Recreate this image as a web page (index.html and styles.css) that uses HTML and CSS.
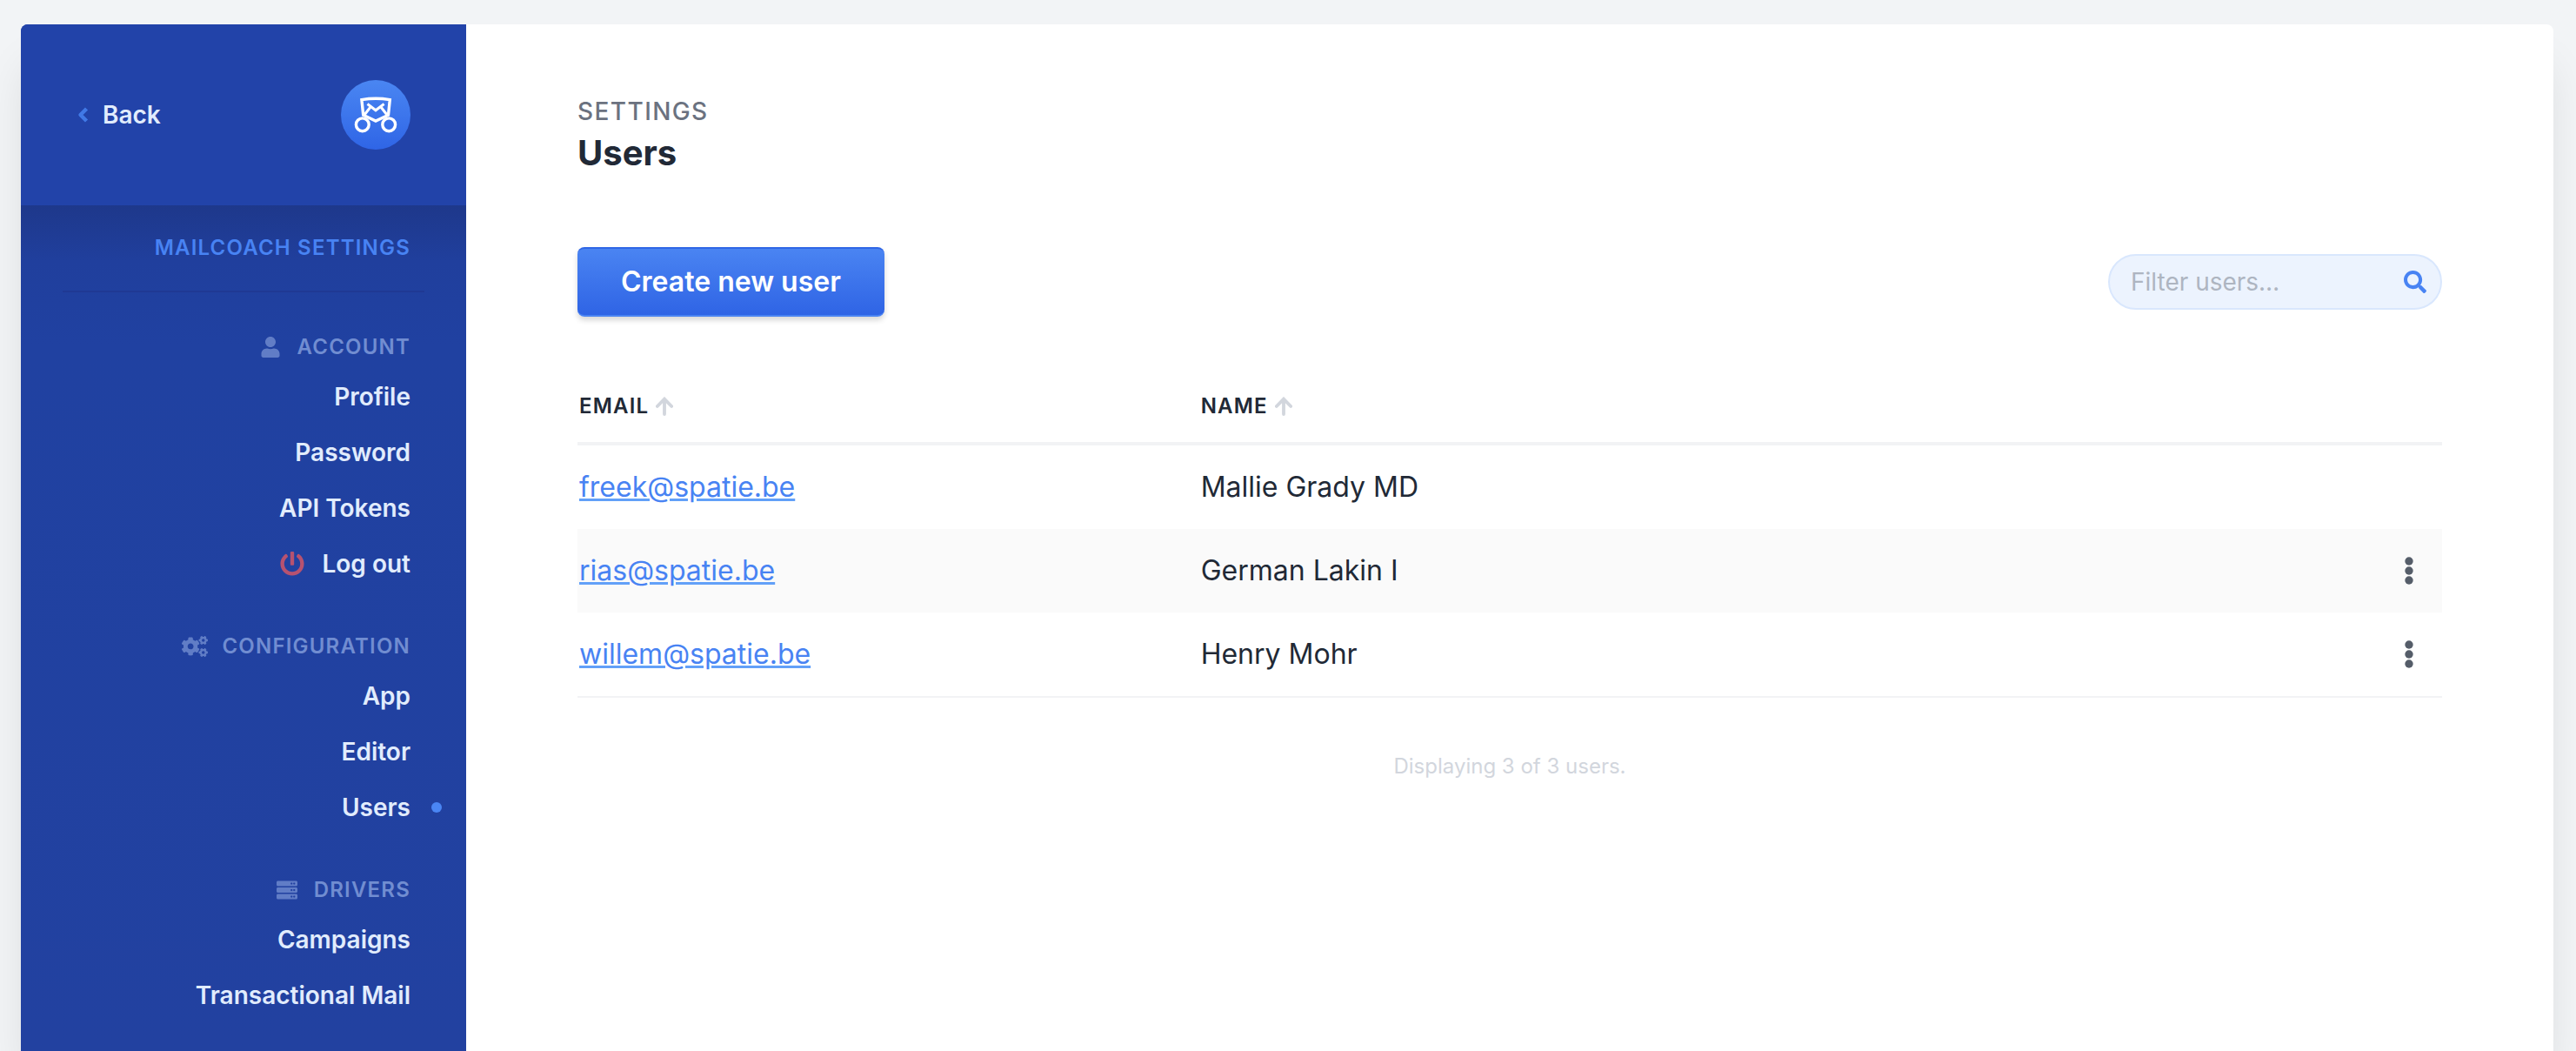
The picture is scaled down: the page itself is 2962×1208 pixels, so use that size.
FILE: index.html
```html
<!DOCTYPE html>
<html lang="en">
<head>
<meta charset="utf-8">
<meta name="viewport" content="width=device-width, initial-scale=1">
<title>Users</title>
<link rel="stylesheet" href="styles.css">
</head>
<body>
<svg class="sprite" aria-hidden="true">
  <symbol id="cog" viewBox="0 0 640 512">
    <path id="small-gear" d="M512.1 191l-8.200 14.300c-3 5.300-9.400 7.500-15.100 5.400-11.800-4.400-22.600-10.700-32.100-18.600-4.600-3.800-5.800-10.500-2.800-15.700l8.200-14.300c-6.900-8-12.300-17.300-15.900-27.400h-16.500c-6 0-11.200-4.300-12.200-10.300-2-12-2.100-24.600 0-37.100 1-6 6.200-10.400 12.200-10.400h16.500c3.600-10.100 9-19.400 15.900-27.400l-8.200-14.300c-3-5.200-1.900-11.900 2.800-15.700 9.500-7.900 20.400-14.200 32.100-18.600 5.700-2.100 12.100.1 15.100 5.400l8.200 14.300c10.500-1.900 21.200-1.900 31.700 0L552 6.300c3-5.300 9.400-7.500 15.100-5.400 11.800 4.400 22.600 10.700 32.100 18.600 4.600 3.800 5.800 10.500 2.800 15.700l-8.200 14.300c6.900 8 12.300 17.300 15.900 27.400h16.500c6 0 11.200 4.300 12.200 10.300 2 12 2.100 24.600 0 37.100-1 6-6.200 10.400-12.200 10.400h-16.500c-3.600 10.100-9 19.400-15.900 27.400l8.200 14.300c3 5.200 1.900 11.900-2.800 15.700-9.500 7.900-20.400 14.200-32.100 18.600-5.700 2.100-12.100-.1-15.100-5.400l-8.200-14.300c-10.400 1.900-21.200 1.900-31.700 0zm-10.500-58.800c38.500 29.600 82.400-14.300 52.800-52.800-38.500-29.700-82.400 14.300-52.800 52.800z"/>
    <use href="#small-gear" y="299"/>
    <path d="M386.300 286.100l33.700 16.800c10.100 5.800 14.500 18.100 10.500 29.100-8.900 24.200-26.400 46.400-42.600 65.800-7.400 8.900-20.200 11.100-30.300 5.300l-29.100-16.800c-16 13.700-34.600 24.600-54.900 31.700v33.600c0 11.600-8.300 21.600-19.700 23.600-24.600 4.200-50.400 4.400-75.900 0-11.500-2-20-11.900-20-23.600V418c-20.300-7.200-38.900-18-54.900-31.700L74 403c-10 5.800-22.900 3.600-30.300-5.300-16.200-19.400-33.300-41.600-42.200-65.700-4-10.900.4-23.200 10.500-29.100l33.300-16.800c-3.900-20.900-3.900-42.400 0-63.400L12 205.800c-10.100-5.800-14.600-18.100-10.500-29 8.900-24.200 26-46.400 42.200-65.800 7.400-8.900 20.200-11.100 30.300-5.300l29.100 16.800c16-13.700 34.600-24.600 54.900-31.700V57.100c0-11.500 8.200-21.500 19.600-23.500 24.600-4.200 50.500-4.400 76-.1 11.500 2 20 11.900 20 23.600v33.600c20.300 7.200 38.900 18 54.900 31.700l29.100-16.800c10-5.800 22.900-3.600 30.300 5.300 16.200 19.400 33.200 41.600 42.100 65.800 4 10.900.1 23.200-10 29.100l-33.700 16.800c3.900 21 3.900 42.500 0 63.500zm-117.600 21.100c59.200-77-28.700-164.900-105.700-105.700-59.200 77 28.700 164.900 105.700 105.700z"/>
  </symbol>
  <symbol id="user" viewBox="0 0 448 512">
    <path d="M224 256c70.700 0 128-57.300 128-128S294.700 0 224 0 96 57.300 96 128s57.300 128 128 128zm89.600 32h-16.700c-22.200 10.200-46.900 16-72.900 16s-50.600-5.800-72.900-16h-16.700C60.200 288 0 348.200 0 422.400V464c0 26.500 21.500 48 48 48h352c26.500 0 48-21.500 48-48v-41.600c0-74.200-60.200-134.400-134.400-134.400z"/>
  </symbol>
  <symbol id="server" viewBox="0 0 512 512">
    <path id="server-unit" d="M480 160H32c-17.700 0-32-14.300-32-32V64c0-17.700 14.300-32 32-32h448c17.700 0 32 14.300 32 32v64c0 17.700-14.300 32-32 32zm-48-88c-13.300 0-24 10.700-24 24s10.700 24 24 24 24-10.700 24-24-10.700-24-24-24zm-64 0c-13.300 0-24 10.700-24 24s10.700 24 24 24 24-10.700 24-24-10.700-24-24-24z"/>
    <use href="#server-unit" y="160"/>
    <use href="#server-unit" y="320"/>
  </symbol>
  <symbol id="power" viewBox="0 0 512 512">
    <path d="M400 54.100c63 45 104 118.600 104 201.900 0 136.800-110.800 247.700-247.500 248C120 504.300 8.200 393 8 256.400 7.900 173.100 48.900 99.300 111.800 54.200c11.700-8.300 28-4.800 35 7.700L162.600 90c5.900 10.500 3.100 23.800-6.600 31-41.500 30.800-68 79.600-68 134.900-.1 92.300 74.500 168.100 168 168.100 91.600 0 168.600-74.200 168-169.100-.3-51.800-24.700-101.800-68.100-134-9.700-7.200-12.400-20.500-6.500-30.900l15.800-28.100c7-12.400 23.200-16.100 34.800-7.800zM296 264V24c0-13.300-10.700-24-24-24h-32c-13.300 0-24 10.700-24 24v240c0 13.300 10.700 24 24 24h32c13.300 0 24-10.700 24-24z"/>
  </symbol>
  <symbol id="search" viewBox="0 0 512 512">
    <path d="M505 442.700L405.300 343c-4.500-4.500-10.600-7-17-7H372c27.600-35.300 44-79.700 44-128C416 93.100 322.900 0 208 0S0 93.100 0 208s93.100 208 208 208c48.300 0 92.700-16.400 128-44v16.300c0 6.400 2.500 12.500 7 17l99.700 99.700c9.400 9.400 24.600 9.400 33.900 0l28.300-28.300c9.400-9.400 9.400-24.600.1-34zM208 336c-70.700 0-128-57.200-128-128 0-70.700 57.200-128 128-128 70.700 0 128 57.200 128 128 0 70.700-57.200 128-128 128z"/>
  </symbol>
  <symbol id="arrow-up" viewBox="0 0 20 22">
    <path d="M10 20V3M1.800 11L10 2.600 18.200 11" fill="none" stroke="currentColor" stroke-width="3.800" stroke-linecap="round"/>
  </symbol>
  <symbol id="dots" viewBox="0 0 10 32">
    <circle cx="5" cy="5" r="4.700"/><circle cx="5" cy="16" r="4.700"/><circle cx="5" cy="27" r="4.700"/>
  </symbol>
</svg>

<div class="card">
  <aside class="sidebar">
    <header class="sidebar-header">
      <a class="back" href="#">
        <svg class="back-icon" viewBox="0 0 14 20" aria-hidden="true"><path d="M11.500 3L4.500 10l7 7" fill="none" stroke="currentColor" stroke-width="4.400" stroke-linejoin="round"/></svg>
        Back
      </a>
      <a class="logo" href="#" aria-label="Mailcoach">
        <svg viewBox="0 0 80 80" aria-hidden="true">
          <g fill="none" stroke="#fff" stroke-width="3.400">
            <path d="M23.900 22.600Q40 19.800 56.300 22.600L54.500 40.200 40 47 25.700 40.200Z"/>
            <path d="M30.500 27.500L40 34.800 49.600 27.500M27 40L34 31M53 40L46 31" stroke-width="3"/>
            <circle cx="24.800" cy="51.300" r="7.400"/>
            <circle cx="55.200" cy="51.300" r="7.400"/>
          </g>
        </svg>
      </a>
    </header>
    <nav class="nav">
      <h2 class="nav-title">Mailcoach settings</h2>
      <section class="nav-section">
        <h3 class="nav-heading"><svg class="nav-icon"><use href="#user"/></svg>Account</h3>
        <a class="nav-link" href="#">Profile</a>
        <a class="nav-link" href="#">Password</a>
        <a class="nav-link" href="#">API Tokens</a>
        <button class="nav-link" type="button"><svg class="power-icon"><use href="#power"/></svg>Log out</button>
      </section>
      <section class="nav-section">
        <h3 class="nav-heading"><svg class="nav-icon"><use href="#cog"/></svg>Configuration</h3>
        <a class="nav-link" href="#">App</a>
        <a class="nav-link" href="#">Editor</a>
        <a class="nav-link nav-link-active" href="#" aria-current="page">Users</a>
      </section>
      <section class="nav-section">
        <h3 class="nav-heading"><svg class="nav-icon"><use href="#server"/></svg>Drivers</h3>
        <a class="nav-link" href="#">Campaigns</a>
        <a class="nav-link" href="#">Transactional Mail</a>
      </section>
    </nav>
  </aside>

  <main class="main">
    <p class="kicker">Settings</p>
    <h1 class="title">Users</h1>
    <div class="actions">
      <button class="button" type="button">Create new user</button>
      <label class="search">
        <input class="search-input" type="text" placeholder="Filter users…" aria-label="Filter users">
        <svg class="search-icon"><use href="#search"/></svg>
      </label>
    </div>
    <table class="table">
      <thead>
        <tr>
          <th><a class="sort" href="#">Email<svg class="sort-icon"><use href="#arrow-up"/></svg></a></th>
          <th><a class="sort" href="#">Name<svg class="sort-icon"><use href="#arrow-up"/></svg></a></th>
          <th></th>
        </tr>
      </thead>
      <tbody>
        <tr>
          <td><a class="link" href="#">freek@spatie.be</a></td>
          <td>Mallie Grady MD</td>
          <td></td>
        </tr>
        <tr>
          <td><a class="link" href="#">rias@spatie.be</a></td>
          <td>German Lakin I</td>
          <td><button class="menu" type="button" aria-label="Actions"><svg class="menu-icon"><use href="#dots"/></svg></button></td>
        </tr>
        <tr>
          <td><a class="link" href="#">willem@spatie.be</a></td>
          <td>Henry Mohr</td>
          <td><button class="menu" type="button" aria-label="Actions"><svg class="menu-icon"><use href="#dots"/></svg></button></td>
        </tr>
      </tbody>
    </table>
    <p class="summary">Displaying 3 of 3 users.</p>
  </main>
</div>
</body>
</html>
```
FILE: styles.css
```css
* {
  box-sizing: border-box;
}

body {
  margin: 0;
  padding: 28px 26px 0 24px;
  background: #f2f4f6;
  color: #212936;
  font-family: Inter, "Liberation Sans", sans-serif;
  font-size: 32px;
  font-weight: 400;
  line-height: 48px;
}

h1, h2, h3, p {
  margin: 0;
}

a {
  color: inherit;
  text-decoration: none;
}

button {
  border: 0;
  background: none;
  font: inherit;
  color: inherit;
  cursor: pointer;
}

svg {
  display: block;
  fill: currentColor;
}

.sprite {
  position: absolute;
  width: 0;
  height: 0;
}

.card {
  display: flex;
  min-height: calc(100vh - 28px);
  background: #fff;
  border-radius: 8px 8px 0 0;
  box-shadow: 0 40px 50px -10px rgba(0, 0, 0, 0.12);
}

/* Sidebar */

.sidebar {
  display: flex;
  flex-direction: column;
  flex: none;
  width: 512px;
  background: #2142a2;
  border-top-left-radius: 8px;
  color: #e1ecfd;
  font-size: 28px;
  font-weight: 600;
}

.sidebar-header {
  display: flex;
  align-items: center;
  justify-content: space-between;
  padding: 64px;
  background: #2243a9;
  border-top-left-radius: 8px;
}

.back {
  display: flex;
  align-items: center;
  gap: 16px;
}

.back-icon {
  width: 14px;
  height: 20px;
  color: #4179e6;
}

.logo {
  width: 80px;
  height: 80px;
  border-radius: 50%;
  background: linear-gradient(#4a86f2, #2f65e6);
}

.nav {
  flex: 1;
  padding: 0 48px;
  background: linear-gradient(#1e388b, #203f9d 64px, #2041a1 160px, #2241a0);
}

.nav-title {
  padding: 32px 16px;
  border-bottom: 2px solid #1f3993;
  color: #4883f3;
  font-size: 24px;
  font-weight: 600;
  line-height: 34px;
  letter-spacing: 0.05em;
  text-align: right;
  text-transform: uppercase;
}

.nav-section {
  display: flex;
  flex-direction: column;
  align-items: flex-end;
  padding: 38px 16px 0;
}

.nav-heading {
  display: flex;
  align-items: center;
  gap: 16px;
  color: #718dd1;
  font-size: 24px;
  font-weight: 600;
  line-height: 50px;
  letter-spacing: 0.05em;
  text-transform: uppercase;
}

.nav-icon {
  width: 30px;
  height: 24px;
  color: #617dc6;
}

.nav-link {
  position: relative;
  display: flex;
  align-items: center;
  gap: 16px;
  padding: 0;
  line-height: 64px;
}

.nav-link-active::after {
  content: "";
  position: absolute;
  top: 26px;
  right: -36px;
  width: 12px;
  height: 12px;
  border-radius: 50%;
  background: #4a86f4;
}

.power-icon {
  width: 36px;
  height: 28px;
  color: #b65270;
}

/* Main */

.main {
  flex: 1;
  padding: 80px 128px;
}

.kicker {
  color: #6b7280;
  font-size: 28px;
  font-weight: 500;
  line-height: 40px;
  letter-spacing: 0.05em;
  text-transform: uppercase;
}

.title {
  font-size: 40px;
  font-weight: 700;
  line-height: 56px;
}

.actions {
  display: flex;
  align-items: center;
  justify-content: space-between;
  margin: 80px 0 62px;
}

.button {
  height: 80px;
  padding: 0 50px;
  border-top: 2px solid #2f66e6;
  border-bottom: 2px solid #4a83f2;
  border-radius: 8px;
  background: linear-gradient(#4a84f2, #2f64e5);
  box-shadow: 0 4px 6px rgba(0, 0, 0, 0.16);
  color: #fff;
  font-weight: 600;
}

.search {
  display: flex;
  align-items: center;
  width: 384px;
  height: 64px;
  padding: 0 16px 0 24px;
  border: 2px solid #d9e7fd;
  border-radius: 32px;
  background: #ecf3fe;
}

.search-input {
  flex: 1;
  min-width: 0;
  padding: 0;
  border: 0;
  outline: 0;
  background: none;
  color: inherit;
  font: inherit;
  font-size: 28px;
  line-height: 40px;
}

.search-input::placeholder {
  color: #aeb5c1;
}

.search-icon {
  width: 26px;
  height: 26px;
  color: #4883f3;
}

.table {
  width: 100%;
  table-layout: fixed;
  border-collapse: separate;
  border-spacing: 0;
  border-bottom: 2px solid #f2f3f5;
}

.table th {
  padding: 24px 2px;
  border-bottom: 4px solid #f2f3f5;
  font-size: 24px;
  font-weight: 600;
  line-height: 34px;
  letter-spacing: 0.05em;
  text-align: left;
  text-transform: uppercase;
}

.sort {
  display: flex;
  align-items: center;
  gap: 8px;
}

.sort-icon {
  width: 20px;
  height: 22px;
  color: #d2d6dd;
}

.table td {
  height: 96px;
  padding: 0 2px;
}

.table tbody tr:nth-child(even) {
  background: #fafafa;
}

.link {
  color: #4883f3;
  text-decoration: underline;
  text-decoration-color: #62a0f8;
}

.menu {
  display: block;
  margin-left: auto;
  padding: 16px 31px;
}

.menu-icon {
  width: 10px;
  height: 32px;
  color: #555d69;
}

.summary {
  margin-top: 62px;
  color: #d2d6dd;
  font-size: 24px;
  line-height: 34px;
  text-align: center;
}
```
